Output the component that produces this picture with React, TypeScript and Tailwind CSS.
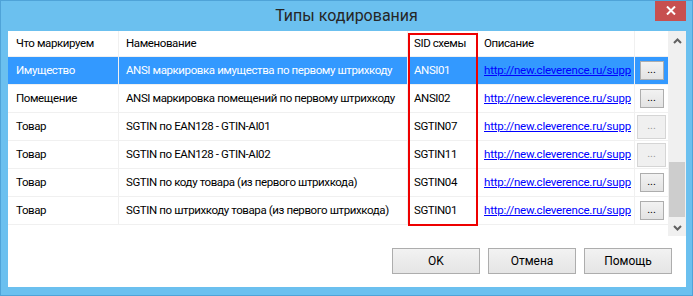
const rows = [
  { what: "Имущество", name: "ANSI маркировка имущества по первому штрихкоду", sid: "ANSI01", disabled: false },
  { what: "Помещение", name: "ANSI маркировка помещений по первому штрихкоду", sid: "ANSI02", disabled: false },
  { what: "Товар", name: "SGTIN по EAN128 - GTIN-AI01", sid: "SGTIN07", disabled: true },
  { what: "Товар", name: "SGTIN по EAN128 - GTIN-AI02", sid: "SGTIN11", disabled: true },
  { what: "Товар", name: "SGTIN по коду товара (из первого штрихкода)", sid: "SGTIN04", disabled: false },
  { what: "Товар", name: "SGTIN по штрихкоду товара (из первого штрихкода)", sid: "SGTIN01", disabled: false },
];

// the column is too narrow, the grid cuts the link here
const URL_TEXT = "http://new.cleverence.ru/supp";

function DialogButton({ label }: { label: string }) {
  return (
    <button className="w-[88px] h-[26px] border border-[#adadad] bg-gradient-to-b from-[#f2f2f2] to-[#e5e5e5] text-[12px] text-black">
      {label}
    </button>
  );
}

export default function App() {
  return (
    <div
      className="w-[693px] h-[296px] bg-[#6bc0ef] border border-[#4fa3d8] flex flex-col overflow-hidden text-black"
      style={{ fontFamily: 'Roboto, "Liberation Sans", Arial, sans-serif' }}
    >
      {/* title bar */}
      <div className="relative h-[30px] shrink-0 flex items-center justify-center">
        <span className="text-[16px] text-[#262626] pb-[1px]">Типы кодирования</span>
        <div className="absolute top-[-1px] right-[6px] w-[31px] h-[21px] bg-[#c75050] flex items-center justify-center">
          <svg width="10" height="9" viewBox="0 0 10 9">
            <path d="M1 0.5 L9 8.5 M9 0.5 L1 8.5" stroke="#fff" strokeWidth="2" />
          </svg>
        </div>
      </div>

      {/* client area */}
      <div className="ml-[7px] mr-[6px] h-[256px] bg-white flex flex-col">
        <div className="flex h-[205px] text-[11.5px] tracking-[-0.4px]">
          <div className="flex flex-col w-[660px]">
            {/* header */}
            <div className="flex h-[26px] border-b border-[#f0f0f0]">
              <div className="w-[111px] border-r border-[#f0f0f0] pl-[8px] flex items-center">Что маркируем</div>
              <div className="w-[289px] border-r border-[#f0f0f0] pl-[7px] flex items-center">Наменование</div>
              <div className="w-[70px] border-r border-[#f0f0f0] pl-[6px] flex items-center">SID схемы</div>
              <div className="w-[157px] border-r border-[#f0f0f0] pl-[6px] flex items-center">Описание</div>
              <div className="w-[33px]" />
            </div>
            {rows.map((r, i) => {
              const sel = i === 0;
              return (
                <div
                  key={r.sid}
                  className={`flex h-[28px] border-b border-[#f0f0f0] ${sel ? "bg-[#3399ff] text-white" : ""}`}
                >
                  <div className="w-[111px] border-r border-[#f0f0f0] pl-[8px] flex items-center">{r.what}</div>
                  <div className="w-[289px] border-r border-[#f0f0f0] pl-[7px] flex items-center whitespace-nowrap overflow-hidden">{r.name}</div>
                  <div className="w-[70px] border-r border-[#f0f0f0] pl-[6px] flex items-center">{r.sid}</div>
                  <div className="w-[157px] border-r border-[#f0f0f0] pl-[6px] pr-[2px] flex items-center">
                    <span className="block w-full overflow-hidden whitespace-nowrap text-[#0000ff] underline tracking-[-0.2px]">{URL_TEXT}</span>
                  </div>
                  <div className="w-[33px] flex items-center justify-center tracking-normal">
                    {r.disabled ? (
                      <div className="w-[29px] h-[24px] border border-[#d5d5d5] bg-[#f0f0f0] text-[#9a9a9a] text-[11px] flex items-center justify-center">...</div>
                    ) : (
                      <div className="w-[24px] h-[19px] border border-[#adadad] bg-gradient-to-b from-[#f2f2f2] to-[#e3e3e3] text-black text-[11px] flex items-center justify-center leading-none pb-[3px]">...</div>
                    )}
                  </div>
                </div>
              );
            })}
          </div>
          {/* scrollbar */}
          <div className="w-[18px] bg-[#f0f0f0] flex flex-col">
            <div className="h-[19px] flex items-center justify-center">
              <svg width="9" height="6" viewBox="0 0 9 6">
                <path d="M1 5 L4.5 1.5 L8 5" stroke="#606060" strokeWidth="2" fill="none" />
              </svg>
            </div>
            <div className="flex-1 flex flex-col pt-[112px] pb-[1px]">
              <div className="h-[55px] mx-[1px] bg-[#cdcdcd]" />
            </div>
            <div className="h-[17px] flex items-center justify-center">
              <svg width="9" height="6" viewBox="0 0 9 6">
                <path d="M1 1 L4.5 4.5 L8 1" stroke="#606060" strokeWidth="2" fill="none" />
              </svg>
            </div>
          </div>
        </div>

        {/* buttons */}
        <div className="flex justify-end gap-[8px] pr-[14px] pt-[12px]">
          <DialogButton label="OK" />
          <DialogButton label="Отмена" />
          <DialogButton label="Помощь" />
        </div>
      </div>

      {/* annotation box */}
      <div className="absolute left-[408px] top-[33px] w-[70px] h-[193px] border-2 border-[#ee0000] pointer-events-none" />
    </div>
  );
}
